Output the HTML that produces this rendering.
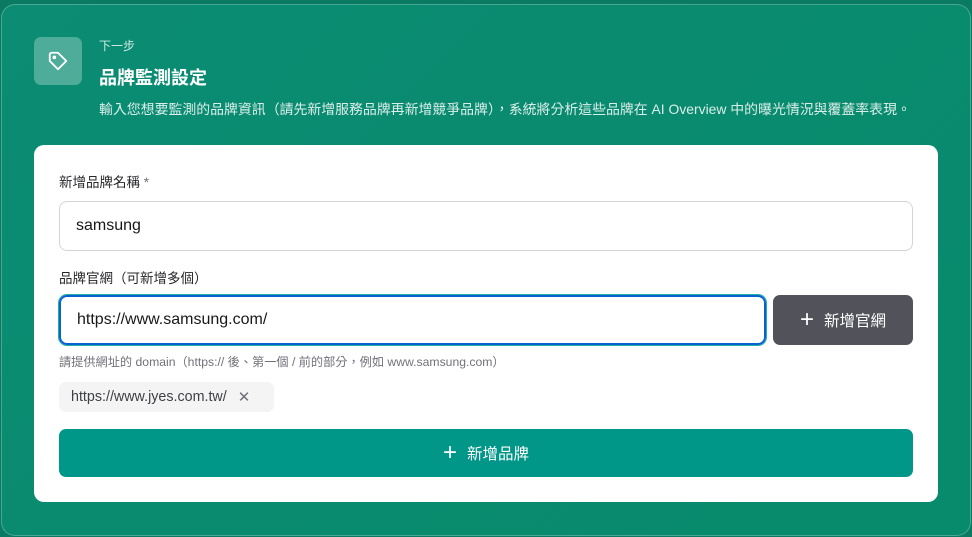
<!DOCTYPE html>
<html><head><meta charset="utf-8"><style>
*{box-sizing:border-box;margin:0;padding:0}
body{width:972px;height:537px;background:#0a7a63;font-family:"Liberation Sans","Noto Sans CJK TC",sans-serif;position:relative;overflow:hidden}
.panel{position:absolute;left:1px;top:4px;width:970px;height:532px;border-radius:14px;background:linear-gradient(135deg,#0b8c73,#088a6c);border:1px solid rgba(255,255,255,.25)}
.icon{position:absolute;left:34px;top:37px;width:48px;height:48px;border-radius:7px;background:rgba(255,255,255,.28);display:flex;align-items:center;justify-content:center}
.t1{position:absolute;left:99px;top:37px;font-size:12px;color:rgba(255,255,255,.8)}
.t2{position:absolute;left:99px;top:64px;font-size:18px;font-weight:bold;color:#fff}
.t3{position:absolute;left:99px;top:99px;font-size:13.9px;color:rgba(255,255,255,.85);white-space:nowrap}
.card{position:absolute;left:34px;top:145px;width:904px;height:357px;background:#fff;border-radius:10px}
.lbl{position:absolute;left:59px;font-size:13.5px;color:#27272a}
.inp{position:absolute;left:59px;border:1px solid #d4d4d8;border-radius:8px;font-size:16px;color:#18181b;padding-left:16px;display:flex;align-items:center}
.btn{position:absolute;color:#fff;border-radius:7px;display:flex;align-items:center;justify-content:center;font-size:15.5px;gap:10px}
</style></head><body>
<div class="panel"></div>
<div class="icon"><svg width="22" height="22" viewBox="0 0 24 24" fill="none" stroke="#fff" stroke-width="2" stroke-linejoin="round"><path d="M12 3h7a2 2 0 0 1 2 2v7l-9 9-9-9z" transform="rotate(-90 12 12)"/><circle cx="8" cy="8" r="1" fill="#fff"/></svg></div>
<div class="t1">下一步</div>
<div class="t2">品牌監測設定</div>
<div class="t3">輸入您想要監測的品牌資訊（請先新增服務品牌再新增競爭品牌），系統將分析這些品牌在 AI Overview 中的曝光情況與覆蓋率表現。</div>
<div class="card"></div>
<div class="lbl" style="top:171px">新增品牌名稱 <span style="color:#71717a">*</span></div>
<div class="inp" style="top:201px;width:854px;height:50px">samsung</div>
<div class="lbl" style="top:267px">品牌官網（可新增多個）</div>
<div class="inp" style="top:295px;width:707px;height:50px;border:2px solid #0a5fd1;box-shadow:0 0 0 1px #20b2a0">https://www.samsung.com/</div>
<div class="btn" style="left:773px;top:295px;width:140px;height:50px;background:#52525b"><span style="font-size:24px;font-weight:300">+</span>新增官網</div>
<div style="position:absolute;left:59px;top:352px;font-size:12.2px;color:#71717a;white-space:nowrap">請提供網址的 domain（https:// 後、第一個 / 前的部分，例如 www.samsung.com）</div>
<div style="position:absolute;left:59px;top:382px;width:215px;height:30px;background:#f4f4f5;border-radius:7px;font-size:14.3px;color:#3f3f46;display:flex;align-items:center;padding-left:12px">https://www.jyes.com.tw/<span style="margin-left:11px;color:#71717a;font-size:15px">✕</span></div>
<div class="btn" style="left:59px;top:429px;width:854px;height:48px;background:#009688"><span style="font-size:24px;font-weight:300">+</span>新增品牌</div>
</body></html>
